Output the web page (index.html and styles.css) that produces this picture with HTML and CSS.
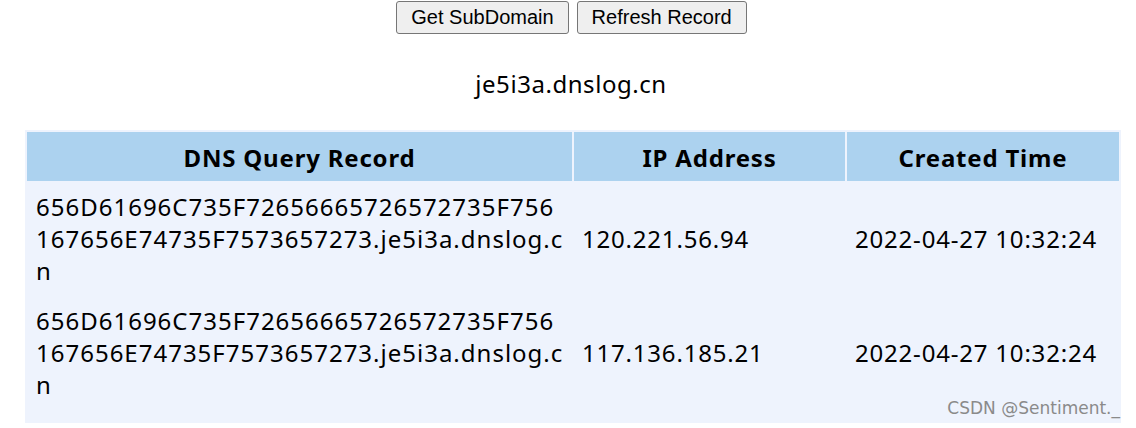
FILE: index.html
```html
<!DOCTYPE html>
<html>
<head>
<meta charset="utf-8">
<link rel="stylesheet" href="styles.css">
</head>
<body>
<div class="page">
  <div class="actions">
    <button class="btn">Get SubDomain</button>
    <button class="btn">Refresh Record</button>
  </div>
  <div class="domain">je5i3a.dnslog.cn</div>
  <table class="records">
    <colgroup>
      <col class="c1"><col class="c2"><col class="c3">
    </colgroup>
    <thead>
      <tr><th>DNS Query Record</th><th>IP Address</th><th>Created Time</th></tr>
    </thead>
    <tbody>
      <tr>
        <td class="q">656D61696C735F72656665726572735F756167656E74735F7573657273.je5i3a.dnslog.cn</td>
        <td>120.221.56.94</td>
        <td>2022-04-27 10:32:24</td>
      </tr>
      <tr>
        <td class="q">656D61696C735F72656665726572735F756167656E74735F7573657273.je5i3a.dnslog.cn</td>
        <td>117.136.185.21</td>
        <td>2022-04-27 10:32:24</td>
      </tr>
    </tbody>
  </table>
  <div class="watermark">CSDN @Sentiment._</div>
</div>
</body>
</html>
```
FILE: styles.css
```css
html, body {
  margin: 0;
  padding: 0;
  background: #ffffff;
}
.page {
  position: relative;
  width: 1136px;
  height: 428px;
  overflow: hidden;
  font-family: "Noto Sans", "Open Sans", sans-serif;
  color: #000;
}
.actions {
  display: flex;
  justify-content: center;
  gap: 8px;
  padding-top: 1px;
  padding-left: 7px;
}
.btn {
  font-family: "Liberation Sans", Arial, sans-serif;
  font-size: 20px;
  height: 33px;
  padding: 0 14px;
  background: #efefef;
  border: 1px solid #767676;
  border-radius: 3px;
  color: #000;
}
.domain {
  text-align: center;
  font-size: 24px;
  letter-spacing: 0.55px;
  line-height: 32px;
  margin-top: 34px;
  padding-left: 6px;
}
.records {
  margin-top: 30px;
  margin-left: 25px;
  width: 1094px;
  border-collapse: separate;
  border-spacing: 2px;
  padding-bottom: 12px;
  background: #eef3fd;
  table-layout: fixed;
  font-size: 24px;
  line-height: 32px;
  letter-spacing: 0.8px;
}
.c1 { width: 545px; }
.c2 { width: 271px; }
.c3 { width: 272px; }
.records th {
  background: #acd2ef;
  font-weight: bold;
  padding: 9px 8px 7px;
  height: 33px;
}
.records td {
  background: #eef3fd;
  padding: 8px;
  vertical-align: middle;
}
.records td.q {
  padding-left: 9px;
  letter-spacing: 1px;
  word-break: break-all;
}
.watermark {
  position: absolute;
  right: 16px;
  top: 398px;
  font-family: "DejaVu Sans", sans-serif;
  font-size: 17px;
  color: #8a8a8a;
}
```
